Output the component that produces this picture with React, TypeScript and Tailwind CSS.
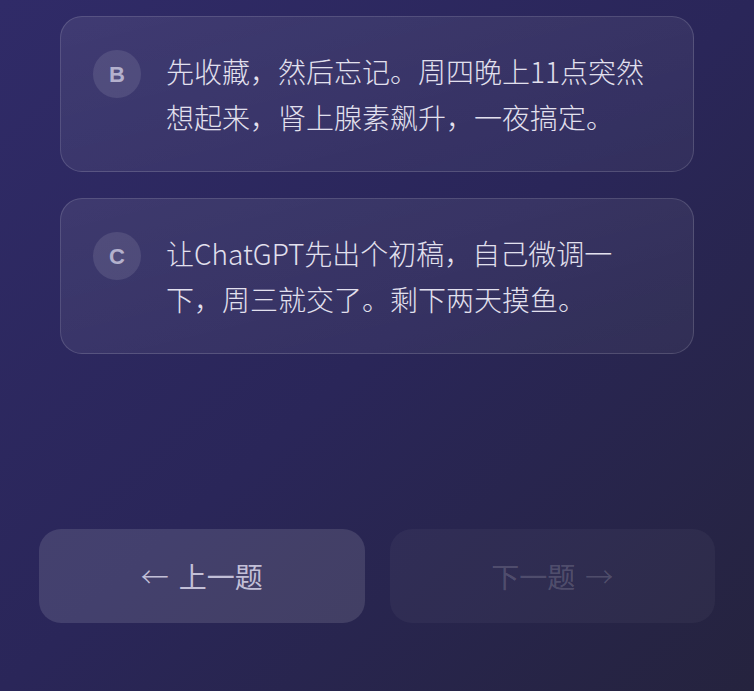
const options = [
	{ key: "B", text: "先收藏，然后忘记。周四晚上11点突然想起来，肾上腺素飙升，一夜搞定。" },
	{ key: "C", text: "让ChatGPT先出个初稿，自己微调一下，周三就交了。剩下两天摸鱼。" },
];

function OptionCard({ letter, text }: { letter: string; text: string }) {
	return (
		<div className="flex items-start gap-[25px] rounded-[22px] border border-white/[0.14] bg-linear-to-br from-white/[0.08] to-white/[0.045] pl-[32px] pr-[32px] py-[31px]">
			<div
				className="mt-[2px] w-[48px] h-[48px] shrink-0 rounded-full bg-white/[0.1] flex items-center justify-center text-[22px] font-bold text-[#b4b1cd]"
				style={{ fontFamily: '"Liberation Sans", Arial, sans-serif' }}
			>
				{letter}
			</div>
			<p className="flex-1 text-[28px] leading-[46px] font-light text-[#e2e0ee]">{text}</p>
		</div>
	);
}

export default function App() {
	return (
		<div
			className="w-[754px] h-[691px] overflow-hidden flex flex-col bg-linear-to-br from-[#302b68] via-[#2a2659] to-[#25233e]"
			style={{ fontFamily: '"Noto Sans CJK SC", "Noto Sans", sans-serif' }}
		>
			{/* Options */}
			<div className="flex flex-col gap-[26px] pt-[16px] px-[60px]">
				{options.map((o) => (
					<OptionCard key={o.key} letter={o.key} text={o.text} />
				))}
			</div>

			{/* Navigation */}
			<div className="mt-auto flex gap-[25px] px-[39px] pb-[68px]">
				<button className="flex-1 h-[94px] rounded-[22px] bg-white/[0.12] text-[#c2bfd7] text-[28px] font-normal flex items-center justify-center gap-[10px]">
					<span className="font-light">←</span>
					<span>上一题</span>
				</button>
				<button className="flex-1 h-[94px] rounded-[22px] bg-white/[0.04] text-white/[0.18] text-[28px] font-normal flex items-center justify-center gap-[10px]">
					<span>下一题</span>
					<span className="font-light">→</span>
				</button>
			</div>
		</div>
	);
}
